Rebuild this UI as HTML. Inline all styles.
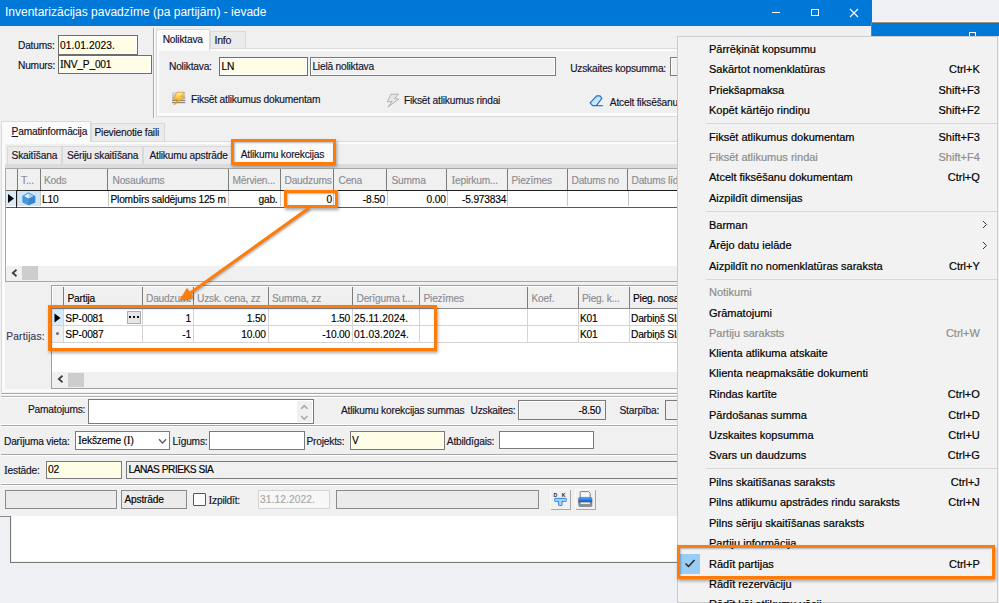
<!DOCTYPE html><html><head><meta charset="utf-8"><style>
*{box-sizing:border-box}
html,body{margin:0;padding:0}
body{width:999px;height:603px;overflow:hidden;position:relative;background:#f0f0f0;font-family:"Liberation Sans",sans-serif;font-size:10.2px;letter-spacing:-0.2px;color:#000;-webkit-text-stroke:0.15px currentColor}
.a{position:absolute}
.t{position:absolute;white-space:nowrap;line-height:12px;height:12px}
.lb{color:#12122a}
.hd{color:#8c8c94}
.m{font-size:11px;color:#000;letter-spacing:0;-webkit-text-stroke:0.2px currentColor}
.dis{color:#8d8d8d}
.I{font-family:"Liberation Serif",serif;font-size:1.12em;line-height:0}
</style></head><body><div class="a" style="left:0px;top:0px;width:871.5px;height:25.6px;background:#0078d7"></div>
<div class="t " style="left:5px;top:6.3px;font-size:12px;color:#fff;line-height:14px;top:4.8px;letter-spacing:0;-webkit-text-stroke:0">Inventarizācijas pavadzīme (pa partijām) - ievade</div>
<div class="a" style="left:772px;top:11.5px;width:8.0px;height:1.0px;background:#fff"></div>
<div class="a" style="left:811px;top:8.5px;width:8.0px;height:7.5px;border:1px solid #fff"></div>
<svg class="a" style="left:849px;top:8px" width="10" height="10"><path d="M1 1L9 9M9 1L1 9" stroke="#fff" stroke-width="1.1"/></svg>
<div class="a" style="left:871.5px;top:0px;width:127.5px;height:21.2px;background:#eff0f3"></div>
<div class="a" style="left:871.5px;top:21.2px;width:127.5px;height:1.1px;background:#fdfdfd"></div>
<div class="a" style="left:871.5px;top:22.3px;width:127.5px;height:0.9px;background:#a08c78"></div>
<div class="a" style="left:872px;top:23.2px;width:127.0px;height:13.1px;background:#0078d7"></div>
<div class="a" style="left:871.3px;top:22.3px;width:1.0px;height:14.0px;background:#8c7a68"></div>
<div class="a" style="left:968.5px;top:31.5px;width:7.5px;height:5.5px;border:1px solid #fff;border-bottom:none"></div>
<div class="t lb" style="left:18px;top:40.1px;">Datums:</div>
<div class="a" style="left:58px;top:35px;width:80.0px;height:20.0px;background:#fffde6;border:1px solid #6e6e6e;box-shadow:inset 1px 1px 0 #fff,inset -1px -1px 0 #fff"></div>
<div class="t " style="left:60px;top:40.0px;letter-spacing:0.1px">01.01.2023.</div>
<div class="t lb" style="left:18px;top:59.9px;">Numurs:</div>
<div class="a" style="left:58px;top:55px;width:94.0px;height:19.0px;background:#fffde6;border:1px solid #6e6e6e;box-shadow:inset 1px 1px 0 #fff,inset -1px -1px 0 #fff"></div>
<div class="t " style="left:60px;top:59.4px;"><span class="I">I</span>NV_P_001</div>
<div class="a" style="left:153px;top:28px;width:1.0px;height:89.5px;background:#a8a8a8"></div>
<div class="a" style="left:154px;top:28px;width:1.0px;height:89.5px;background:#fdfdfd"></div>
<div class="a" style="left:210.4px;top:31px;width:35.2px;height:17.0px;background:#ebebeb;border:1px solid #d9d9d9;border-bottom:none"></div>
<div class="a" style="left:156px;top:47.5px;width:843.0px;height:69.5px;background:#fbfbfb;border:1px solid #dadada"></div>
<div class="a" style="left:159.4px;top:50.9px;width:839.6px;height:62.6px;background:#f0f0f0"></div>
<div class="a" style="left:156px;top:29.4px;width:54.4px;height:21.6px;background:#fbfbfb;border:1px solid #dadada;border-bottom:none"></div>
<div class="t lb" style="left:162.7px;top:33.6px;">Noliktava</div>
<div class="t lb" style="left:214.4px;top:33.7px;font-size:10.6px">Info</div>
<div class="t lb" style="left:169px;top:61.0px;">Noliktava:</div>
<div class="a" style="left:219.4px;top:57px;width:88.2px;height:18.6px;background:#fffde6;border:1px solid #6e6e6e;box-shadow:inset 1px 1px 0 #fff,inset -1px -1px 0 #fff"></div>
<div class="t " style="left:221.5px;top:61.1px;">LN</div>
<div class="a" style="left:310px;top:57px;width:246.0px;height:18.6px;background:#f0f0f0;border:1px solid #7a7a7a;box-shadow:inset 1px 1px 0 #fff,inset -1px -1px 0 #fff"></div>
<div class="t lb" style="left:312.4px;top:61.1px;">Lielā noliktava</div>
<div class="t lb" style="right:333.0px;top:62.6px;text-align:right;">Uzskaites kopsumma:</div>
<div class="a" style="left:669.5px;top:57.3px;width:30.5px;height:18.3px;background:#f0f0f0;border:1px solid #7a7a7a;box-shadow:inset 1px 1px 0 #fff"></div>
<svg class="a" style="left:171px;top:91px" width="16" height="16" viewBox="0 0 16 16"><defs><linearGradient id="lg1" x1="0" y1="0" x2="0" y2="1"><stop offset="0" stop-color="#d6d8dc"/><stop offset="1" stop-color="#b4b8bc"/></linearGradient><linearGradient id="lg2" x1="0" y1="0" x2="0" y2="1"><stop offset="0" stop-color="#fff2b0"/><stop offset="0.5" stop-color="#f5c030"/><stop offset="1" stop-color="#e89a10"/></linearGradient></defs><rect x="1" y="1" width="13.3" height="7.5" fill="url(#lg1)"/><rect x="1" y="9" width="13.3" height="1.2" fill="#8a8a8a"/><rect x="1" y="11" width="13.3" height="1.2" fill="#8a8a8a"/><path d="M6 1.2L13.3 1.2L9.8 5.5L14 6.2L3 13.8L7 8.6L2.2 8.8Z" fill="url(#lg2)" stroke="#e0901a" stroke-width="0.7" stroke-linejoin="round"/></svg>
<div class="t lb" style="left:191px;top:93.8px;">Fiksēt atlikumus dokumentam</div>
<svg class="a" style="left:385px;top:92.5px" width="16" height="16" viewBox="0 0 16 16"><path d="M6 1.2L13.3 1.2L9.8 5.5L14 6.2L3 13.8L7 8.6L2.2 8.8Z" fill="#e4e4e4" stroke="#a4a4a4" stroke-width="0.8" stroke-linejoin="round"/></svg>
<div class="t lb" style="left:404px;top:94.8px;">Fiksēt atlikumus rindai</div>
<svg class="a" style="left:589px;top:94px" width="16" height="14" viewBox="0 0 16 14"><defs><linearGradient id="lg3" x1="0" y1="0" x2="1" y2="1"><stop offset="0" stop-color="#a8d4fa"/><stop offset="1" stop-color="#eef7fe"/></linearGradient></defs><path d="M1.1 8.8L7.7 1.8H11L12.8 4.4L7.3 11.7H3.7Z" fill="url(#lg3)" stroke="#1f72d0" stroke-width="1.2" stroke-linejoin="round"/><path d="M7.3 11.7H13.9" stroke="#1f72d0" stroke-width="1.2"/></svg>
<div class="t lb" style="left:609.8px;top:96.8px;">Atcelt fiksēšanu dokumentam</div>
<div class="a" style="left:91.4px;top:123.3px;width:73.6px;height:17.7px;background:#ebebeb;border:1px solid #d9d9d9;border-bottom:none"></div>
<div class="a" style="left:1.3px;top:140.5px;width:997.7px;height:251.5px;background:#fbfbfb;border:1px solid #dadada;border-bottom:none"></div>
<div class="a" style="left:4.5px;top:144px;width:994.5px;height:245.0px;background:#f0f0f0"></div>
<div class="a" style="left:1.3px;top:120.8px;width:90.1px;height:21.2px;background:#fbfbfb;border:1px solid #dadada;border-bottom:none"></div>
<div class="t lb" style="left:11.6px;top:126.1px;"><u>P</u>amatinformācija</div>
<div class="t lb" style="left:94.5px;top:127.3px;">Pievienotie faili</div>
<div class="a" style="left:7px;top:145.6px;width:54.7px;height:18.9px;background:#ebebeb;border:1px solid #d9d9d9;border-bottom:none"></div>
<div class="t lb" style="left:11.6px;top:150.3px;">Skaitīšana</div>
<div class="a" style="left:61.7px;top:145.6px;width:81.3px;height:18.9px;background:#ebebeb;border:1px solid #d9d9d9;border-bottom:none"></div>
<div class="t lb" style="left:66.9px;top:150.3px;">Sēriju skaitīšana</div>
<div class="a" style="left:143px;top:145.6px;width:89.0px;height:18.9px;background:#ebebeb;border:1px solid #d9d9d9;border-bottom:none"></div>
<div class="t lb" style="left:149.5px;top:150.3px;">Atlikumu apstrāde</div>
<div class="a" style="left:5px;top:164px;width:994.0px;height:3.5px;background:#dcdcdc"></div>
<div class="a" style="left:233px;top:141.5px;width:101.0px;height:23.5px;background:#fbfbfb"></div>
<div class="t lb" style="left:240.7px;top:148.6px;">Atlikumu korekcijas</div>
<div class="a" style="left:5px;top:167.5px;width:994.0px;height:114.0px;background:#fff;border:1px solid #a8a8a8"></div>
<div class="a" style="left:6px;top:168.5px;width:993.0px;height:21.5px;background:#f0f0f0"></div>
<div class="a" style="left:16.5px;top:169px;width:1.0px;height:21.0px;background:#7c7c7c"></div>
<div class="a" style="left:39.6px;top:169px;width:1.0px;height:21.0px;background:#7c7c7c"></div>
<div class="a" style="left:107.4px;top:169px;width:1.0px;height:21.0px;background:#7c7c7c"></div>
<div class="a" style="left:227.5px;top:169px;width:1.0px;height:21.0px;background:#7c7c7c"></div>
<div class="a" style="left:279.5px;top:169px;width:1.0px;height:21.0px;background:#7c7c7c"></div>
<div class="a" style="left:332.5px;top:169px;width:1.0px;height:21.0px;background:#7c7c7c"></div>
<div class="a" style="left:386.3px;top:169px;width:1.0px;height:21.0px;background:#7c7c7c"></div>
<div class="a" style="left:446.4px;top:169px;width:1.0px;height:21.0px;background:#7c7c7c"></div>
<div class="a" style="left:506.6px;top:169px;width:1.0px;height:21.0px;background:#7c7c7c"></div>
<div class="a" style="left:566.6px;top:169px;width:1.0px;height:21.0px;background:#7c7c7c"></div>
<div class="a" style="left:627.3px;top:169px;width:1.0px;height:21.0px;background:#7c7c7c"></div>
<div class="t hd" style="left:21px;top:174.8px;">T...</div>
<div class="t hd" style="left:44px;top:174.8px;">Kods</div>
<div class="t hd" style="left:112.5px;top:174.8px;">Nosaukums</div>
<div class="t hd" style="left:232.5px;top:174.8px;">Mērvien...</div>
<div class="t hd" style="left:284.5px;top:174.8px;">Daudzums</div>
<div class="t hd" style="left:338.5px;top:174.8px;">Cena</div>
<div class="t hd" style="left:391.5px;top:174.8px;">Summa</div>
<div class="t hd" style="left:451.5px;top:174.8px;"><span class="I">I</span>epirkum...</div>
<div class="t hd" style="left:511.5px;top:174.8px;">Piezīmes</div>
<div class="t hd" style="left:571.5px;top:174.8px;">Datums no</div>
<div class="t hd" style="left:631.5px;top:174.8px;">Datums līdz</div>
<div class="a" style="left:6px;top:189.5px;width:11.0px;height:1.0px;background:#6a6a6a"></div>
<div class="a" style="left:17px;top:189.5px;width:982.0px;height:1.0px;background:#1e1e1e"></div>
<div class="a" style="left:6px;top:206.5px;width:993.0px;height:1.5px;background:#585858"></div>
<div class="a" style="left:6px;top:190.5px;width:11.5px;height:15.8px;background:#d9ebf9"></div>
<div class="a" style="left:17.5px;top:190.5px;width:23.1px;height:15.8px;background:#cfe4f7"></div>
<div class="a" style="left:17.0px;top:190.5px;width:1.0px;height:15.8px;background:#c8c8c8"></div>
<div class="a" style="left:40.1px;top:190.5px;width:1.0px;height:15.8px;background:#c8c8c8"></div>
<div class="a" style="left:107.9px;top:190.5px;width:1.0px;height:15.8px;background:#c8c8c8"></div>
<div class="a" style="left:228.0px;top:190.5px;width:1.0px;height:15.8px;background:#c8c8c8"></div>
<div class="a" style="left:280.0px;top:190.5px;width:1.0px;height:15.8px;background:#c8c8c8"></div>
<div class="a" style="left:333.0px;top:190.5px;width:1.0px;height:15.8px;background:#c8c8c8"></div>
<div class="a" style="left:386.8px;top:190.5px;width:1.0px;height:15.8px;background:#c8c8c8"></div>
<div class="a" style="left:446.9px;top:190.5px;width:1.0px;height:15.8px;background:#c8c8c8"></div>
<div class="a" style="left:507.1px;top:190.5px;width:1.0px;height:15.8px;background:#c8c8c8"></div>
<div class="a" style="left:567.1px;top:190.5px;width:1.0px;height:15.8px;background:#c8c8c8"></div>
<div class="a" style="left:627.8px;top:190.5px;width:1.0px;height:15.8px;background:#c8c8c8"></div>
<div class="a" style="left:16px;top:189.5px;width:1.3px;height:18.0px;background:#1e1e1e"></div>
<svg class="a" style="left:7px;top:193px" width="8" height="11"><path d="M1 1L7 5.5L1 10z" fill="#000"/></svg>
<svg class="a" style="left:21px;top:191px" width="16" height="15" viewBox="0 0 16 15"><path d="M1.3 5L7.5 1.3L14.2 5V11.5L7.5 14.3L1.3 11.5Z" fill="#4a96da"/><path d="M7.5 5.5L14.2 5V11.5L7.5 14.3Z" fill="#3a86cc"/><path d="M3.3 5L7.5 2.6L12.2 5L7.5 7.4Z" fill="#eef7fe"/><path d="M7.5 2.6L12.2 5L7.5 7.4Z" fill="#9ccff5"/></svg>
<div class="t " style="left:42px;top:193.6px;">L10</div>
<div class="t " style="left:110.5px;top:193.6px;">Plombīrs saldējums 125 m</div>
<div class="t " style="right:721.5px;top:193.6px;text-align:right;">gab.</div>
<div class="t " style="right:667.0px;top:193.6px;text-align:right;">0</div>
<div class="t " style="right:614.0px;top:193.6px;text-align:right;">-8.50</div>
<div class="t " style="right:553.4px;top:193.6px;text-align:right;">0.00</div>
<div class="t " style="right:492.8px;top:193.6px;text-align:right;">-5.973834</div>
<div class="a" style="left:6px;top:265.5px;width:993.0px;height:15.0px;background:#f0f0f0"></div>
<svg class="a" style="left:11px;top:269px" width="7" height="8"><path d="M5.5 0.8L1.8 4L5.5 7.2" fill="none" stroke="#404040" stroke-width="1.8"/></svg>
<div class="a" style="left:22px;top:266px;width:16.0px;height:14.0px;background:#cdcdcd"></div>
<div class="t lb" style="left:6.2px;top:331.4px;color:#3a3a55;letter-spacing:0.2px">Partijas:</div>
<div class="a" style="left:51px;top:285px;width:948.0px;height:103.5px;background:#fff;border:1px solid #a0a0a0"></div>
<div class="a" style="left:52px;top:286px;width:947.0px;height:22.0px;background:#f0f0f0;border-top:1px solid #fff;border-left:1px solid #fff"></div>
<div class="a" style="left:62.8px;top:287px;width:1.0px;height:21.0px;background:#7c7c7c"></div>
<div class="a" style="left:141.7px;top:287px;width:1.0px;height:21.0px;background:#7c7c7c"></div>
<div class="a" style="left:192.5px;top:287px;width:1.0px;height:21.0px;background:#7c7c7c"></div>
<div class="a" style="left:267.5px;top:287px;width:1.0px;height:21.0px;background:#7c7c7c"></div>
<div class="a" style="left:351.8px;top:287px;width:1.0px;height:21.0px;background:#7c7c7c"></div>
<div class="a" style="left:419.0px;top:287px;width:1.0px;height:21.0px;background:#7c7c7c"></div>
<div class="a" style="left:527.1px;top:287px;width:1.0px;height:21.0px;background:#7c7c7c"></div>
<div class="a" style="left:577.5px;top:287px;width:1.0px;height:21.0px;background:#7c7c7c"></div>
<div class="a" style="left:628.5px;top:287px;width:1.0px;height:21.0px;background:#7c7c7c"></div>
<div class="t " style="left:67.5px;top:292.8px;width:72.7px;overflow:hidden">Partija</div>
<div class="t hd" style="left:146px;top:292.8px;width:45.0px;overflow:hidden">Daudzums</div>
<div class="t hd" style="left:197px;top:292.8px;width:69.0px;overflow:hidden">Uzsk. cena, zz</div>
<div class="t hd" style="left:272px;top:292.8px;width:78.3px;overflow:hidden">Summa, zz</div>
<div class="t hd" style="left:356.5px;top:292.8px;width:61.0px;overflow:hidden">Derīguma t...</div>
<div class="t hd" style="left:423.5px;top:292.8px;width:102.1px;overflow:hidden">Piezīmes</div>
<div class="t hd" style="left:531.5px;top:292.8px;width:44.5px;overflow:hidden">Koef.</div>
<div class="t hd" style="left:582px;top:292.8px;width:45.0px;overflow:hidden">Pieg. k...</div>
<div class="t " style="left:633px;top:292.8px;width:60.0px;overflow:hidden">Pieg. nosaukums</div>
<div class="a" style="left:52px;top:307.5px;width:947.0px;height:1.0px;background:#8c8c8c"></div>
<div class="a" style="left:52px;top:325px;width:947.0px;height:1.0px;background:#d4d4d4"></div>
<div class="a" style="left:52px;top:342px;width:947.0px;height:1.0px;background:#d4d4d4"></div>
<div class="a" style="left:52px;top:308.5px;width:11.3px;height:16.5px;background:#d9ebf9"></div>
<div class="a" style="left:52px;top:326px;width:11.3px;height:16.0px;background:#f0f0f0"></div>
<div class="a" style="left:62.8px;top:308.5px;width:1.0px;height:33.5px;background:#d4d4d4"></div>
<div class="a" style="left:141.7px;top:308.5px;width:1.0px;height:33.5px;background:#d4d4d4"></div>
<div class="a" style="left:192.5px;top:308.5px;width:1.0px;height:33.5px;background:#d4d4d4"></div>
<div class="a" style="left:267.5px;top:308.5px;width:1.0px;height:33.5px;background:#d4d4d4"></div>
<div class="a" style="left:351.8px;top:308.5px;width:1.0px;height:33.5px;background:#d4d4d4"></div>
<div class="a" style="left:419.0px;top:308.5px;width:1.0px;height:33.5px;background:#d4d4d4"></div>
<div class="a" style="left:527.1px;top:308.5px;width:1.0px;height:33.5px;background:#d4d4d4"></div>
<div class="a" style="left:577.5px;top:308.5px;width:1.0px;height:33.5px;background:#d4d4d4"></div>
<div class="a" style="left:628.5px;top:308.5px;width:1.0px;height:33.5px;background:#d4d4d4"></div>
<svg class="a" style="left:54px;top:313px" width="7" height="10"><path d="M0.5 0.5L6.5 5L0.5 9.5z" fill="#000"/></svg>
<div class="a" style="left:55.5px;top:332px;width:3.0px;height:3.0px;background:#707070;border-radius:50%"></div>
<div class="t " style="left:65.3px;top:313.1px;">SP-0081</div>
<div class="a" style="left:127px;top:310.5px;width:13.6px;height:13.5px;background:#e6e6e6;border:1px solid #adadad"></div>
<div class="a" style="left:129px;top:316px;width:1.7px;height:1.7px;background:#111"></div>
<div class="a" style="left:133px;top:316px;width:1.7px;height:1.7px;background:#111"></div>
<div class="a" style="left:137px;top:316px;width:1.7px;height:1.7px;background:#111"></div>
<div class="t " style="left:65.3px;top:329.3px;">SP-0087</div>
<div class="t " style="right:808.0px;top:313.1px;text-align:right;">1</div>
<div class="t " style="right:733.2px;top:313.1px;text-align:right;">1.50</div>
<div class="t " style="right:649.0px;top:313.1px;text-align:right;">1.50</div>
<div class="t " style="left:354px;top:313.1px;letter-spacing:0.1px">25.11.2024.</div>
<div class="t " style="left:580px;top:313.1px;">K01</div>
<div class="t " style="left:631px;top:313.1px;">Darbiņš SIA</div>
<div class="t " style="right:808.0px;top:329.3px;text-align:right;">-1</div>
<div class="t " style="right:733.2px;top:329.3px;text-align:right;">10.00</div>
<div class="t " style="right:649.0px;top:329.3px;text-align:right;">-10.00</div>
<div class="t " style="left:354px;top:329.3px;letter-spacing:0.1px">01.03.2024.</div>
<div class="t " style="left:580px;top:329.3px;">K01</div>
<div class="t " style="left:631px;top:329.3px;">Darbiņš SIA</div>
<div class="a" style="left:52px;top:372px;width:947.0px;height:15.5px;background:#f0f0f0"></div>
<svg class="a" style="left:57px;top:375px" width="7" height="8"><path d="M5.5 0.8L1.8 4L5.5 7.2" fill="none" stroke="#404040" stroke-width="1.8"/></svg>
<div class="a" style="left:68px;top:372.5px;width:16.0px;height:14.5px;background:#cdcdcd"></div>
<div class="a" style="left:1px;top:392.5px;width:998.0px;height:1.0px;background:#a8a8a8"></div>
<div class="a" style="left:1px;top:393.5px;width:998.0px;height:1.0px;background:#fff"></div>
<div class="a" style="left:1px;top:395.5px;width:998.0px;height:1.0px;background:#b4b4b4"></div>
<div class="a" style="left:1px;top:396.5px;width:998.0px;height:1.0px;background:#fff"></div>
<div class="t lb" style="left:28px;top:403.8px;">Pamatojums:</div>
<div class="a" style="left:88px;top:399px;width:226.0px;height:24.5px;background:#fff;border:1px solid #7a7a7a"></div>
<div class="a" style="left:297.2px;top:400.7px;width:14.8px;height:21.1px;background:#f0f0f0"></div>
<svg class="a" style="left:297px;top:401px" width="15" height="21"><path d="M4.2 7.8L7.3 4.6L10.4 7.8M4.2 15L7.3 18.2L10.4 15" fill="none" stroke="#a8a8a8" stroke-width="1.6"/></svg>
<div class="t lb" style="left:341px;top:405.2px;">Atlikumu korekcijas summas</div>
<div class="t lb" style="left:470.5px;top:405.2px;">Uzskaites:</div>
<div class="a" style="left:518px;top:400px;width:87.5px;height:19.5px;background:#f0f0f0;border:1px solid #7a7a7a;box-shadow:inset 1px 1px 0 #fff"></div>
<div class="t " style="right:398.2px;top:404.8px;text-align:right;">-8.50</div>
<div class="t lb" style="left:619.5px;top:404.8px;">Starpība:</div>
<div class="a" style="left:664.5px;top:400px;width:35.5px;height:19.5px;background:#f0f0f0;border:1px solid #7a7a7a"></div>
<div class="a" style="left:1px;top:423.5px;width:998.0px;height:1.0px;background:#fff"></div>
<div class="a" style="left:1px;top:424.5px;width:998.0px;height:1.0px;background:#a8a8a8"></div>
<div class="a" style="left:1px;top:425.5px;width:998.0px;height:1.0px;background:#fafafa"></div>
<div class="t lb" style="left:4px;top:436.2px;">Darījuma vieta:</div>
<div class="a" style="left:75px;top:431px;width:95.0px;height:18.5px;background:#fff;border:1px solid #7a7a7a"></div>
<div class="t " style="left:78px;top:435.3px;font-size:10.2px"><span class="I">I</span>ekšzeme (<span class="I">I</span>)</div>
<svg class="a" style="left:157.5px;top:437.5px" width="10" height="7"><path d="M1 1.3L4.6 5L8.2 1.3" fill="none" stroke="#5a5a5a" stroke-width="1.3"/></svg>
<div class="t lb" style="left:172.6px;top:435.8px;">Līgums:</div>
<div class="a" style="left:209px;top:431px;width:95.7px;height:18.5px;background:#fff;border:1px solid #7a7a7a"></div>
<div class="t lb" style="left:306.5px;top:435.8px;">Projekts:</div>
<div class="a" style="left:349.8px;top:431px;width:95.5px;height:18.5px;background:#fffde6;border:1px solid #7a7a7a"></div>
<div class="t " style="left:352px;top:434.8px;">V</div>
<div class="t lb" style="left:446.8px;top:435.8px;">Atbildīgais:</div>
<div class="a" style="left:499px;top:430.8px;width:95.0px;height:18.7px;background:#fff;border:1px solid #7a7a7a"></div>
<div class="a" style="left:1px;top:453.8px;width:998.0px;height:1.0px;background:#a8a8a8"></div>
<div class="a" style="left:1px;top:454.8px;width:998.0px;height:1.0px;background:#fff"></div>
<div class="t lb" style="left:4px;top:464.8px;"><span class="I">I</span>estāde:</div>
<div class="a" style="left:45.6px;top:460.6px;width:76.8px;height:18.4px;background:#fffde6;border:1px solid #7a7a7a"></div>
<div class="t " style="left:48px;top:464.4px;">02</div>
<div class="a" style="left:126.4px;top:460.6px;width:872.6px;height:18.4px;background:#f0f0f0;border:1px solid #7a7a7a"></div>
<div class="t " style="left:128.5px;top:464.4px;letter-spacing:-0.5px">LANAS PRIEKS SIA</div>
<div class="a" style="left:1px;top:482.5px;width:998.0px;height:1.0px;background:#fff"></div>
<div class="a" style="left:1px;top:483.5px;width:998.0px;height:1.0px;background:#a8a8a8"></div>
<div class="a" style="left:1px;top:484.5px;width:998.0px;height:1.0px;background:#fff"></div>
<div class="a" style="left:4.8px;top:490px;width:111.9px;height:19.0px;background:#ebebeb;border:1px solid #8a8a8a"></div>
<div class="a" style="left:121.4px;top:490px;width:66.0px;height:19.0px;background:#ebebeb;border:1px solid #8a8a8a"></div>
<div class="t " style="left:124.5px;top:494.3px;">Apstrāde</div>
<div class="a" style="left:192.5px;top:492.5px;width:13.0px;height:13.0px;background:#fbfbfb;border:1px solid #555;border-radius:1px"></div>
<div class="t lb" style="left:208.5px;top:494.8px;"><span class="I">I</span>zpildīt:</div>
<div class="a" style="left:257.5px;top:490px;width:72.5px;height:19.0px;background:#f7f7f7;border:1px solid #d4d4d4"></div>
<div class="t " style="left:260px;top:494.3px;color:#a8a8a8;letter-spacing:0.1px">31.12.2022.</div>
<div class="a" style="left:335.5px;top:490.4px;width:203.0px;height:18.6px;background:#ebebeb;border:1px solid #8a8a8a"></div>
<div class="a" style="left:550.2px;top:489.1px;width:19.6px;height:19.9px;background:#f0f0f0;border-top:1px solid #fafafa;border-left:1px solid #fafafa;box-shadow:1px 1px 0 #a8a8a8"></div>
<svg class="a" style="left:550px;top:489px" width="20" height="20" viewBox="0 0 20 20"><text x="3.6" y="8.2" font-size="5.2" font-family="Liberation Sans" font-weight="bold" fill="#2a2a2a" style="-webkit-text-stroke:0">D</text><text x="11.8" y="8.2" font-size="5.2" font-family="Liberation Sans" font-weight="bold" fill="#2a2a2a" style="-webkit-text-stroke:0">K</text><path d="M5.3 9.4H15.8Q16.5 9.4 16.5 10.2V11.6Q16.5 12.4 15.8 12.4H12V16Q12 16.6 11.4 16.6H9.2Q8.6 16.6 8.6 16V12.4H5.3Q4.6 12.4 4.6 11.6V10.2Q4.6 9.4 5.3 9.4Z" fill="#a9d4f7" stroke="#2a86e0" stroke-width="1"/></svg>
<div class="a" style="left:574.8px;top:489.1px;width:20.0px;height:19.9px;background:#f0f0f0;border-top:1px solid #fafafa;border-left:1px solid #fafafa;box-shadow:1px 1px 0 #a8a8a8"></div>
<svg class="a" style="left:575px;top:489px" width="20" height="20" viewBox="0 0 20 20"><defs><linearGradient id="lg4" x1="0" y1="0" x2="0" y2="1"><stop offset="0" stop-color="#4aa8ff"/><stop offset="1" stop-color="#0a4fc0"/></linearGradient></defs><path d="M5.2 9V3.3Q5.2 2.6 5.9 2.6H13.6L15.2 4.2V9" fill="#f4f6f8" stroke="#6a7480" stroke-width="0.9"/><path d="M3.5 13.5V9.8Q3.5 8.4 4.9 8.4H15.6Q17 8.4 17 9.8V13.5Z" fill="url(#lg4)" stroke="#5a6470" stroke-width="0.6"/><path d="M3.8 13.2H16.8V16.6Q16.8 17.4 16 17.4H4.6Q3.8 17.4 3.8 16.6Z" fill="#8a929a" stroke="#5a6470" stroke-width="0.6"/><path d="M5.6 13.4H14.8V15H5.6Z" fill="#e8ecf0"/></svg>
<div class="a" style="left:0px;top:516px;width:999.0px;height:87.0px;background:#eff0f4"></div>
<div class="a" style="left:0px;top:515.5px;width:999.0px;height:1.0px;background:#8a8a8a"></div>
<div class="a" style="left:10.3px;top:516px;width:988.7px;height:47.0px;background:#fff;border:1px solid #7a7a7a;border-top:none;box-shadow:inset 1px -1px 0 #f0f0f0"></div>
<div class="a" style="left:230.5px;top:139px;width:105.5px;height:25.8px;border:3px solid #ff7c08;box-shadow:1px 2px 3px rgba(0,0,0,.35),inset 1px 1px 2px rgba(40,60,90,.35)"></div>
<div class="a" style="left:284.3px;top:190px;width:53.7px;height:18.0px;border:3px solid #ff7c08;box-shadow:1px 2px 3px rgba(0,0,0,.35),inset 1px 1px 2px rgba(40,60,90,.35)"></div>
<div class="a" style="left:48px;top:305px;width:388.5px;height:45.8px;border:3px solid #ff7c08;box-shadow:1px 2px 3px rgba(0,0,0,.35),inset 1px 1px 2px rgba(40,60,90,.35)"></div>
<svg class="a" style="left:0;top:0" width="999" height="603"><g style="filter:drop-shadow(1px 1.5px 1.2px rgba(0,0,0,.35))"><path d="M308.7 208.2L190.4 292.9" stroke="#ff7c08" stroke-width="3"/><path d="M179.2 300.8L193.9 297.8L186.9 288z" fill="#ff7c08"/></g></svg>
<div class="a" style="left:677px;top:36.2px;width:321.0px;height:566.8px;background:#f2f2f2;border:1px solid #cccccc"></div>
<div class="a" style="left:998px;top:36px;width:1.0px;height:567.0px;background:#f0f0f0"></div>
<div class="a" style="left:680px;top:553.8px;width:20.0px;height:20.2px;background:#99cdf5"></div>
<svg class="a" style="left:684px;top:558px" width="12" height="11"><path d="M1.5 5.5L4.5 8.5L10.5 2" fill="none" stroke="#222" stroke-width="1.4"/></svg>
<div class="t m" style="left:709px;top:42.7px;">Pārrēķināt kopsummu</div>
<div class="t m" style="left:709px;top:62.9px;">Sakārtot nomenklatūras</div>
<div class="t m" style="right:19.2px;top:62.9px;text-align:right;">Ctrl+K</div>
<div class="t m" style="left:709px;top:83.5px;">Priekšapmaksa</div>
<div class="t m" style="right:19.2px;top:83.5px;text-align:right;">Shift+F3</div>
<div class="t m" style="left:709px;top:104.1px;">Kopēt kārtējo rindiņu</div>
<div class="t m" style="right:19.2px;top:104.1px;text-align:right;">Shift+F2</div>
<div class="a" style="left:705.8px;top:123.0px;width:290.9px;height:1.0px;background:#d7d7d7"></div>
<div class="t m" style="left:709px;top:130.6px;">Fiksēt atlikumus dokumentam</div>
<div class="t m" style="right:19.2px;top:130.6px;text-align:right;">Shift+F3</div>
<div class="t m dis" style="left:709px;top:151.2px;">Fiksēt atlikumus rindai</div>
<div class="t m dis" style="right:19.2px;top:151.2px;text-align:right;">Shift+F4</div>
<div class="t m" style="left:709px;top:171.4px;">Atcelt fiksēšanu dokumentam</div>
<div class="t m" style="right:19.2px;top:171.4px;text-align:right;">Ctrl+Q</div>
<div class="t m" style="left:709px;top:191.6px;">Aizpildīt dimensijas</div>
<div class="a" style="left:705.8px;top:210.9px;width:290.9px;height:1.0px;background:#d7d7d7"></div>
<div class="t m" style="left:709px;top:218.7px;">Barman</div>
<svg class="a" style="left:982px;top:220.4px" width="6" height="9"><path d="M1 1L4.5 4.5L1 8" fill="none" stroke="#333" stroke-width="1"/></svg>
<div class="t m" style="left:709px;top:239.0px;">Ārējo datu ielāde</div>
<svg class="a" style="left:982px;top:240.7px" width="6" height="9"><path d="M1 1L4.5 4.5L1 8" fill="none" stroke="#333" stroke-width="1"/></svg>
<div class="t m" style="left:709px;top:259.5px;">Aizpildīt no nomenklatūras saraksta</div>
<div class="t m" style="right:19.2px;top:259.5px;text-align:right;">Ctrl+Y</div>
<div class="a" style="left:705.8px;top:278.5px;width:290.9px;height:1.0px;background:#d7d7d7"></div>
<div class="t m dis" style="left:709px;top:286.1px;">Notikumi</div>
<div class="t m" style="left:709px;top:306.6px;">Grāmatojumi</div>
<div class="t m dis" style="left:709px;top:327.2px;">Partiju saraksts</div>
<div class="t m dis" style="right:19.2px;top:327.2px;text-align:right;">Ctrl+W</div>
<div class="t m" style="left:709px;top:347.4px;">Klienta atlikuma atskaite</div>
<div class="t m" style="left:709px;top:367.3px;">Klienta neapmaksātie dokumenti</div>
<div class="t m" style="left:709px;top:387.8px;">Rindas kartīte</div>
<div class="t m" style="right:19.2px;top:387.8px;text-align:right;">Ctrl+O</div>
<div class="t m" style="left:709px;top:408.7px;">Pārdošanas summa</div>
<div class="t m" style="right:19.2px;top:408.7px;text-align:right;">Ctrl+D</div>
<div class="t m" style="left:709px;top:429.0px;">Uzskaites kopsumma</div>
<div class="t m" style="right:19.2px;top:429.0px;text-align:right;">Ctrl+U</div>
<div class="t m" style="left:709px;top:449.2px;">Svars un daudzums</div>
<div class="t m" style="right:19.2px;top:449.2px;text-align:right;">Ctrl+G</div>
<div class="a" style="left:705.8px;top:468.2px;width:290.9px;height:1.0px;background:#d7d7d7"></div>
<div class="t m" style="left:709px;top:476.4px;">Pilns skaitīšanas saraksts</div>
<div class="t m" style="right:19.2px;top:476.4px;text-align:right;">Ctrl+J</div>
<div class="t m" style="left:709px;top:496.3px;">Pilns atlikumu apstrādes rindu saraksts</div>
<div class="t m" style="right:19.2px;top:496.3px;text-align:right;">Ctrl+N</div>
<div class="t m" style="left:709px;top:516.8px;">Pilns sēriju skaitīšanas saraksts</div>
<div class="t m" style="left:709px;top:536.8px;">Partiju informācija</div>
<div class="t m" style="left:709px;top:557.7px;">Rādīt partijas</div>
<div class="t m" style="right:19.2px;top:557.7px;text-align:right;">Ctrl+P</div>
<div class="t m" style="left:709px;top:577.8px;">Rādīt rezervāciju</div>
<div class="t m" style="left:709px;top:598.0px;">Rādīt kāj atlikumu vācij</div>
<div class="a" style="left:677.2px;top:545.4px;width:317.8px;height:34.0px;border:3px solid #ff7c08;box-shadow:1px 2px 3px rgba(0,0,0,.35),inset 1px 1px 2px rgba(40,60,90,.35)"></div></body></html>
